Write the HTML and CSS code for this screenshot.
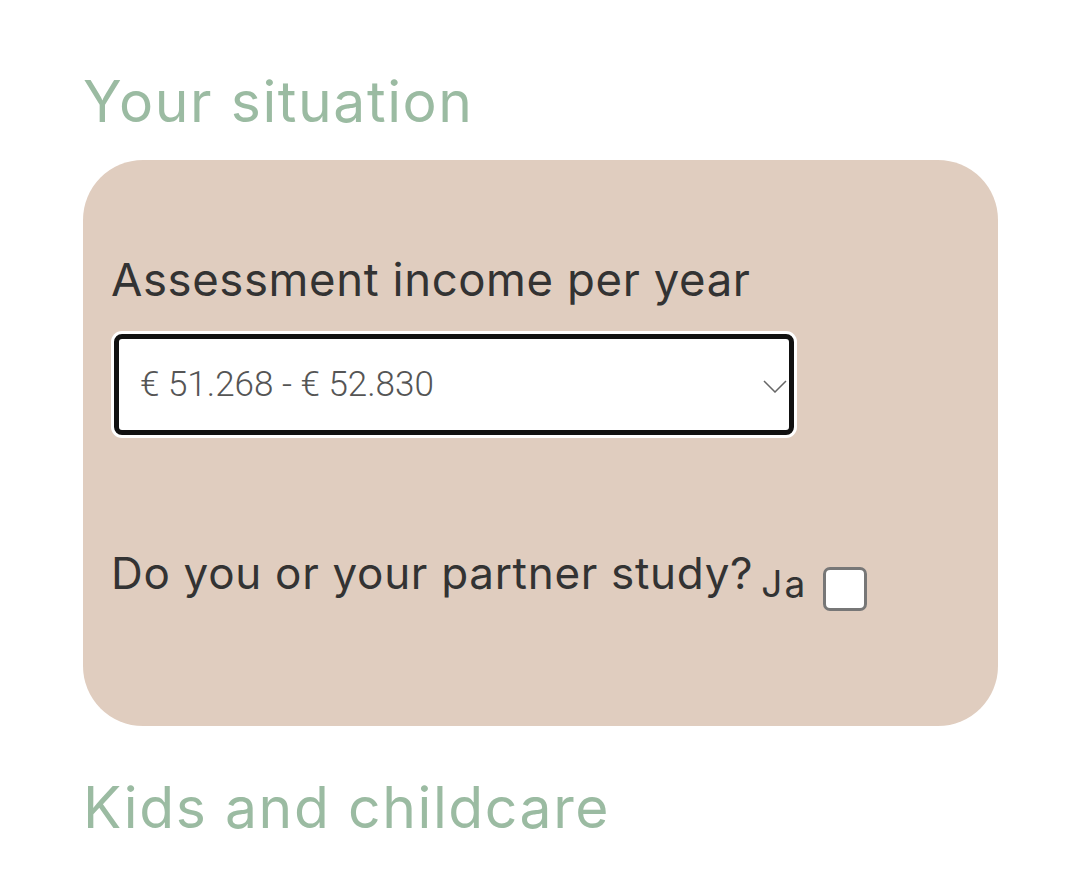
FILE: index.html
```html
<!DOCTYPE html>
<html lang="en">
<head>
<meta charset="utf-8">
<title>Your situation</title>
<link rel="stylesheet" href="styles.css">
</head>
<body>
<main class="page">
  <h2 class="section-title">Your situation</h2>
  <section class="card">
    <label class="field-label" for="income">Assessment income per year</label>
    <div class="select-wrap">
      <select id="income" class="select">
        <option>€ 51.268 - € 52.830</option>
      </select>
      <svg class="chevron" width="24" height="13" viewBox="0 0 24 13" aria-hidden="true"><path d="M1 1 L12 12 L23 1" fill="none" stroke="#666" stroke-width="1.5"/></svg>
    </div>
    <div class="question">
      <span class="question-text">Do you or your partner study?</span>
      <label class="check-label" for="study">Ja</label>
      <input type="checkbox" id="study" class="checkbox">
    </div>
  </section>
  <h2 class="section-title section-title--next">Kids and childcare</h2>
</main>
</body>
</html>
```
FILE: styles.css
```css
* { box-sizing: border-box; }
html, body { margin: 0; padding: 0; background: #fff; }
.page {
  padding: 0 82px 0 83px;
  font-family: Inter, "Noto Sans", sans-serif;
}
.section-title {
  margin: 68px 0 0;
  font-size: 57px;
  line-height: 68px;
  font-weight: 400;
  letter-spacing: 1.6px;
  color: #9bbba2;
}
.section-title--next { margin-top: 48px; }
.card {
  margin-top: 24px;
  background: #e0cdbf;
  border-radius: 60px;
  padding: 92px 28px 115px;
}
.field-label {
  display: block;
  font-size: 45.5px;
  line-height: 56px;
  letter-spacing: 0.6px;
  color: #333;
}
.select-wrap {
  position: relative;
  margin: 26px 0 0 3px;
  width: 680px;
}
.select {
  display: block;
  width: 680px;
  height: 101px;
  appearance: none;
  -webkit-appearance: none;
  background: #fff;
  border: 5px solid #111;
  border-radius: 8px;
  box-shadow: 0 0 0 3px #fff;
  padding: 0 40px 0 21px;
  font-family: Roboto, sans-serif;
  font-size: 35px;
  font-weight: 300;
  color: #555;
  outline: none;
}
.chevron {
  position: absolute;
  right: 7px;
  top: 46px;
}
.question {
  display: flex;
  align-items: flex-start;
  margin-top: 110px;
}
.question-text {
  font-size: 44px;
  line-height: 56px;
  letter-spacing: 0.7px;
  color: #333;
}
.check-label {
  margin: 18px 0 0 8px;
  font-size: 37px;
  line-height: 42px;
  letter-spacing: 2px;
  color: #333;
}
.checkbox {
  appearance: none;
  -webkit-appearance: none;
  margin: 22px 0 0 16px;
  width: 44px;
  height: 44px;
  background: #fff;
  border: 3px solid #777;
  border-radius: 7px;
}
```
